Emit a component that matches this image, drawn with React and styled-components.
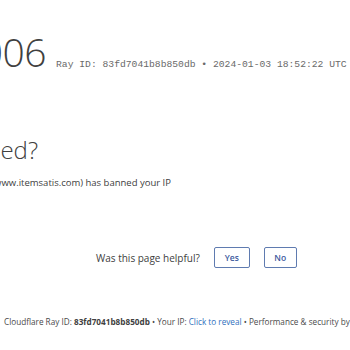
import React from "react";
import styled, { createGlobalStyle } from "styled-components";

const GlobalStyle = createGlobalStyle`
  html, body { margin: 0; padding: 0; background: #ffffff; }
  body { overflow: hidden; font-family: "Open Sans", "Noto Sans", sans-serif; color: #404040; }
`;

const Page = styled.div`
  width: 350px;
  height: 350px;
  display: flex;
  flex-direction: column;
  overflow: hidden;
`;

const Header = styled.header`
  display: flex;
  align-items: baseline;
  padding-top: 32px;
  height: 56px;
  box-sizing: border-box;
  white-space: nowrap;
`;

const Clip = styled.div`
  width: ${(p) => p.$w}px;
  flex: none;
  display: flex;
  justify-content: flex-end;
  overflow: hidden;
  white-space: nowrap;
`;

const Title = styled.h1`
  margin: 0;
  font-size: 39px;
  font-weight: 300;
  line-height: 1;
  color: #404040;
  letter-spacing: -0.5px;
`;

const RayInfo = styled.span`
  margin-left: 10px;
  font-family: "Liberation Mono", "Courier New", monospace;
  font-size: 9.7px;
  color: #6a6a6a;
`;

const Section = styled.section`
  margin-top: 80px;
  display: flex;
  flex-direction: column;
  gap: 11px;
`;

const SubTitle = styled.h2`
  margin: 0;
  font-size: 24px;
  font-weight: 300;
  line-height: 1.2;
  color: #404040;
`;

const Text = styled.p`
  margin: 0;
  font-size: 9.5px;
  line-height: 1.4;
  color: #404040;
`;

const Feedback = styled.div`
  margin-top: 58px;
  padding-left: 96px;
  display: flex;
  align-items: center;
  gap: 14px;
`;

const Question = styled.span`
  font-size: 10px;
  color: #404040;
`;

const Button = styled.button`
  width: ${(p) => p.$w}px;
  height: 21px;
  box-sizing: border-box;
  border: 1px solid #5f7bb0;
  border-radius: 2px;
  background: #ffffff;
  color: #3d5a9e;
  font-family: "Open Sans", sans-serif;
  font-size: 8.5px;
  font-weight: 600;
  padding: 0;
`;

const Footer = styled.footer`
  margin-top: 48px;
  padding-left: 4px;
  white-space: nowrap;
  font-size: 8.2px;
  color: #4a4a4a;
`;

const Bold = styled.strong`
  font-weight: 700;
  color: #404040;
`;

const Link = styled.a`
  color: #2f6fbd;
  text-decoration: none;
`;

export default function App() {
  return (
    <>
      <GlobalStyle />
      <Page>
        <Header>
          <Clip $w={46}>
            <Title>Error 1006</Title>
          </Clip>
          <RayInfo>Ray ID: 83fd7041b8b850db • 2024-01-03 18:52:22 UTC</RayInfo>
        </Header>
        <Section>
          <Clip $w={38}>
            <SubTitle>What happened?</SubTitle>
          </Clip>
          <Clip $w={171}>
            <Text>The owner of this website (www.itemsatis.com) has banned your IP</Text>
          </Clip>
        </Section>
        <Feedback>
          <Question>Was this page helpful?</Question>
          <Button $w={36}>Yes</Button>
          <Button $w={33}>No</Button>
        </Feedback>
        <Footer>
          Cloudflare Ray ID: <Bold>83fd7041b8b850db</Bold> • Your IP: <Link href="#">Click to reveal</Link> • Performance &amp; security by Cloudflare
        </Footer>
      </Page>
    </>
  );
}
